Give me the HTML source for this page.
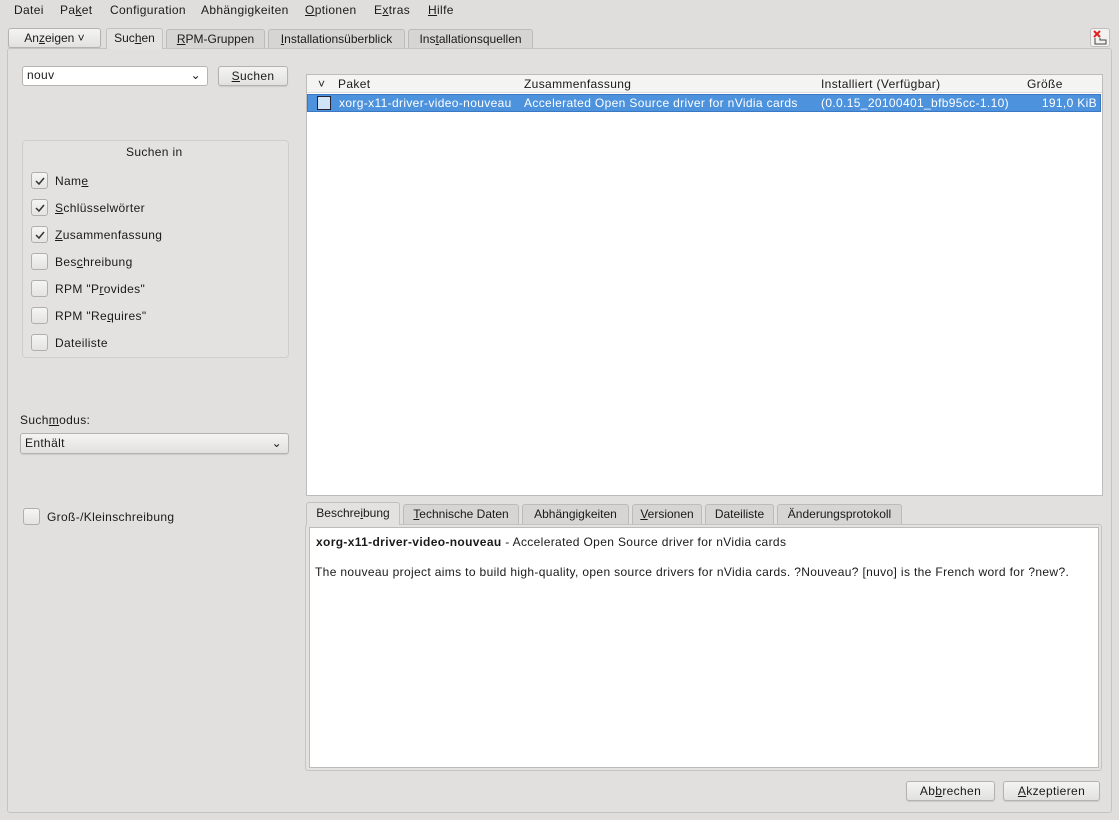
<!DOCTYPE html>
<html><head><meta charset="utf-8"><style>
*{box-sizing:border-box;margin:0;padding:0}
body{width:1119px;height:820px;background:#dfdedd;font-family:"Liberation Sans",sans-serif;font-size:12px;letter-spacing:0.35px;color:#1a1a1a;position:relative;overflow:hidden}
.a{position:absolute;white-space:nowrap}
u{text-decoration:underline}
.btn{position:absolute;border:1px solid #b3b2b1;border-radius:3px;background:linear-gradient(#f4f4f3,#e2e1e0);text-align:center;line-height:18px;box-shadow:0 1px 1px rgba(0,0,0,.1)}
.tab{position:absolute;border:1px solid #bcbbba;border-bottom:none;border-radius:3px 3px 0 0;background:#d6d5d4;text-align:center;line-height:18px;letter-spacing:0}
.tab.on{background:#e3e2e1;border-color:#c2c1c0}
.cb{position:absolute;width:17px;height:17px;border:1px solid #b0afae;border-radius:3px;background:linear-gradient(#f5f5f4,#e4e3e2)}
.cb svg{position:absolute;left:2px;top:2px}
.lbl{position:absolute;left:55px}
.hd{position:absolute;top:77px}
</style></head><body>
<div class="a" style="left:14px;top:3px">Datei</div>
<div class="a" style="left:60px;top:3px">Pa<u>k</u>et</div>
<div class="a" style="left:110px;top:3px">Confi<u>g</u>uration</div>
<div class="a" style="left:201px;top:3px">Abhängigkeiten</div>
<div class="a" style="left:305px;top:3px"><u>O</u>ptionen</div>
<div class="a" style="left:374px;top:3px">E<u>x</u>tras</div>
<div class="a" style="left:428px;top:3px"><u>H</u>ilfe</div>

<div class="btn" style="left:8px;top:28px;width:93px;height:20px;letter-spacing:0">An<u>z</u>eigen ˅</div>
<div class="tab on" style="left:106px;top:28px;width:57px;height:21px;z-index:2">Suc<u>h</u>en</div>
<div class="tab" style="left:166px;top:29px;width:99px;height:19px"><u>R</u>PM-Gruppen</div>
<div class="tab" style="left:268px;top:29px;width:137px;height:19px"><u>I</u>nstallationsüberblick</div>
<div class="tab" style="left:408px;top:29px;width:125px;height:19px">Ins<u>t</u>allationsquellen</div>
<div class="a" style="left:1090px;top:28px;width:20px;height:19px;border:1px solid #c0bfbe;border-radius:3px;background:#f2f2f1"><svg width="18" height="17"><path d="M3 2l6 6M9 2L3 8" stroke="#e02020" stroke-width="2"/><path d="M4 9v6h11v-4h-6v-2" fill="none" stroke="#444" stroke-width="1"/></svg></div>

<div class="a" style="left:7px;top:48px;width:1105px;height:765px;border:1px solid #c5c4c3;border-radius:3px;background:#e1e0df"></div>

<div class="a" style="left:22px;top:66px;width:186px;height:20px;background:#fff;border:1px solid #b5b4b3;border-radius:3px;padding-left:4px;line-height:17px">nouv<span style="position:absolute;right:6px;top:0">⌄</span></div>
<div class="btn" style="left:218px;top:66px;width:70px;height:20px"><u>S</u>uchen</div>

<div class="a" style="left:22px;top:140px;width:267px;height:218px;border:1px solid #cfcecd;border-radius:4px;background:#e3e2e1"></div>
<div class="a" style="left:126px;top:145px">Suchen in</div>
<div class="cb" style="left:31px;top:172px"><svg width="12" height="12"><path d="M2 6l3 3 5-6" fill="none" stroke="#333" stroke-width="1.5"/></svg></div><div class="a lbl" style="top:174px">Nam<u>e</u></div>
<div class="cb" style="left:31px;top:199px"><svg width="12" height="12"><path d="M2 6l3 3 5-6" fill="none" stroke="#333" stroke-width="1.5"/></svg></div><div class="a lbl" style="top:201px"><u>S</u>chlüsselwörter</div>
<div class="cb" style="left:31px;top:226px"><svg width="12" height="12"><path d="M2 6l3 3 5-6" fill="none" stroke="#333" stroke-width="1.5"/></svg></div><div class="a lbl" style="top:228px"><u>Z</u>usammenfassung</div>
<div class="cb" style="left:31px;top:253px"></div><div class="a lbl" style="top:255px">Bes<u>c</u>hreibung</div>
<div class="cb" style="left:31px;top:280px"></div><div class="a lbl" style="top:282px">RPM "P<u>r</u>ovides"</div>
<div class="cb" style="left:31px;top:307px"></div><div class="a lbl" style="top:309px">RPM "Re<u>q</u>uires"</div>
<div class="cb" style="left:31px;top:334px"></div><div class="a lbl" style="top:336px">Dateiliste</div>

<div class="a" style="left:20px;top:413px">Such<u>m</u>odus:</div>
<div class="btn" style="left:20px;top:433px;width:269px;height:21px;text-align:left;padding-left:4px">Enthält<span style="position:absolute;right:6px;top:0">⌄</span></div>
<div class="cb" style="left:23px;top:508px"></div><div class="a" style="left:47px;top:510px">Groß-/Kleinschreibung</div>

<div class="a" style="left:306px;top:74px;width:797px;height:422px;background:#fff;border:1px solid #bdbcbb"></div>
<div class="a" style="left:307px;top:75px;width:795px;height:18px;background:#f4f4f3;border-bottom:1px solid #ddd"></div>
<div class="hd a" style="left:318px">˅</div>
<div class="hd a" style="left:338px">Paket</div>
<div class="hd a" style="left:524px">Zusammenfassung</div>
<div class="hd a" style="left:821px">Installiert (Verfügbar)</div>
<div class="hd a" style="left:1027px">Größe</div>
<div class="a" style="left:307px;top:94px;width:794px;height:18px;background:#4d92dd;border:1px solid #3a78c4;color:#fff;line-height:16px">
<span class="a" style="left:9px;top:1px;width:14px;height:14px;border:1px solid #223;background:#d0e3f7"></span>
<span class="a" style="left:31px;top:0">xorg-x11-driver-video-nouveau</span>
<span class="a" style="left:216px;top:0">Accelerated Open Source driver for nVidia cards</span>
<span class="a" style="left:513px;top:0">(0.0.15_20100401_bfb95cc-1.10)</span>
<span class="a" style="right:3px;top:0">191,0 KiB</span></div>

<div class="tab on" style="left:306px;top:502px;width:94px;height:23px;line-height:21px;z-index:2">Beschre<u>i</u>bung</div>
<div class="tab" style="left:403px;top:504px;width:116px;height:20px"><u>T</u>echnische Daten</div>
<div class="tab" style="left:522px;top:504px;width:107px;height:20px">Abhängigkeiten</div>
<div class="tab" style="left:632px;top:504px;width:70px;height:20px"><u>V</u>ersionen</div>
<div class="tab" style="left:705px;top:504px;width:69px;height:20px">Dateiliste</div>
<div class="tab" style="left:777px;top:504px;width:125px;height:20px">Änderungsprotokoll</div>
<div class="a" style="left:305px;top:524px;width:797px;height:247px;border:1px solid #c5c4c3;border-radius:3px;background:#e3e2e1"></div>
<div class="a" style="left:309px;top:527px;width:790px;height:241px;background:#fff;border:1px solid #bcbbba"></div>
<div class="a" style="left:316px;top:535px"><b>xorg-x11-driver-video-nouveau</b> - Accelerated Open Source driver for nVidia cards</div>
<div class="a" style="left:315px;top:565px">The nouveau project aims to build high-quality, open source drivers for nVidia cards. ?Nouveau? [nuvo] is the French word for ?new?.</div>

<div class="btn" style="left:906px;top:781px;width:89px;height:20px">Ab<u>b</u>rechen</div>
<div class="btn" style="left:1003px;top:781px;width:97px;height:20px"><u>A</u>kzeptieren</div>
</body></html>
